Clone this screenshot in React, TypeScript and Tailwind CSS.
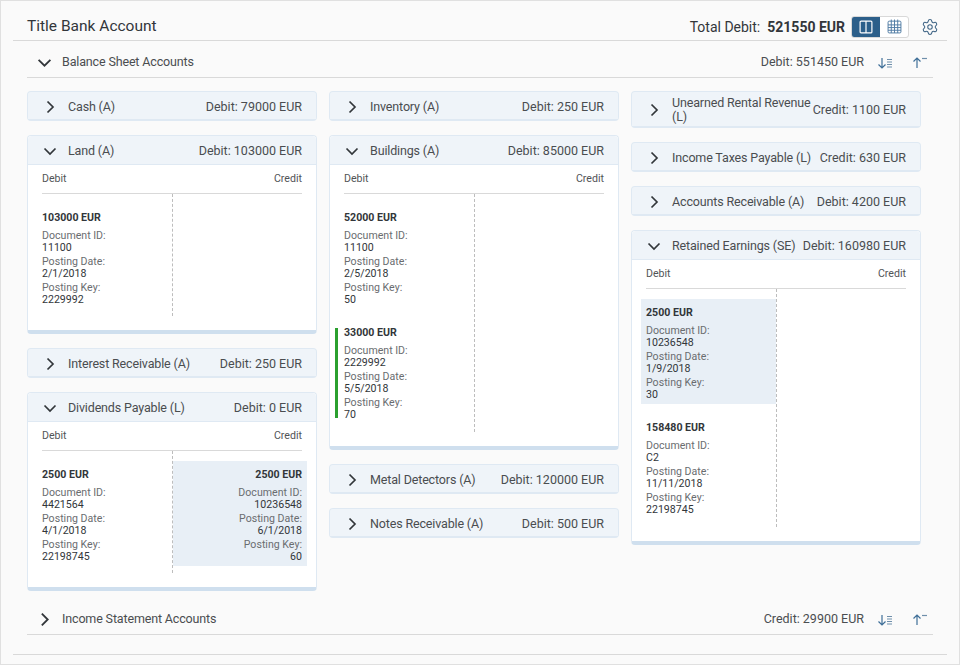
import React from "react";
import { Settings } from "lucide-react";

const FONT = "font-['Roboto',sans-serif]";

interface Entry {
  amount: string;
  docId: string;
  date: string;
  postingKey: string;
  highlighted?: boolean;
  marked?: boolean;
}

interface Account {
  name: React.ReactNode;
  total: string;
  debit?: Entry[];
  credit?: Entry[];
}

const leftColumn: Account[] = [
  { name: "Cash (A)", total: "Debit: 79000 EUR" },
  {
    name: "Land (A)",
    total: "Debit: 103000 EUR",
    debit: [{ amount: "103000 EUR", docId: "11100", date: "2/1/2018", postingKey: "2229992" }],
    credit: []
  },
  { name: "Interest Receivable (A)", total: "Debit: 250 EUR" },
  {
    name: "Dividends Payable (L)",
    total: "Debit: 0 EUR",
    debit: [{ amount: "2500 EUR", docId: "4421564", date: "4/1/2018", postingKey: "22198745" }],
    credit: [{ amount: "2500 EUR", docId: "10236548", date: "6/1/2018", postingKey: "60", highlighted: true }]
  }
];

const middleColumn: Account[] = [
  { name: "Inventory (A)", total: "Debit: 250 EUR" },
  {
    name: "Buildings (A)",
    total: "Debit: 85000 EUR",
    debit: [
      { amount: "52000 EUR", docId: "11100", date: "2/5/2018", postingKey: "50" },
      { amount: "33000 EUR", docId: "2229992", date: "5/5/2018", postingKey: "70", marked: true }
    ],
    credit: []
  },
  { name: "Metal Detectors (A)", total: "Debit: 120000 EUR" },
  { name: "Notes Receivable (A)", total: "Debit: 500 EUR" }
];

const rightColumn: Account[] = [
  { name: "Unearned Rental Revenue (L)", total: "Credit: 1100 EUR" },
  { name: "Income Taxes Payable (L)", total: "Credit: 630 EUR" },
  { name: "Accounts Receivable (A)", total: "Debit: 4200 EUR" },
  {
    name: "Retained Earnings (SE)",
    total: "Debit: 160980 EUR",
    debit: [
      { amount: "2500 EUR", docId: "10236548", date: "1/9/2018", postingKey: "30", highlighted: true },
      { amount: "158480 EUR", docId: "C2", date: "11/11/2018", postingKey: "22198745" }
    ],
    credit: []
  }
];

const Chevron = ({ open, size = 14 }: { open: boolean; size?: number }) => (
  <svg width={size} height={size} viewBox="0 0 14 14" fill="none" stroke="#32363a" strokeWidth="1.7" className="shrink-0">
    {open ? <path d="M1.500 4.500 7 10l5.500-5.500" /> : <path d="M4.500 1.500 10 7l-5.500 5.500" />}
  </svg>
);

const ExpandAllIcon = () => (
  <svg width="16" height="14" viewBox="0 0 16 14" fill="none" stroke="#3f6f98" strokeWidth="1.2">
    <path d="M5 2v10M1.500 8.500 5 12l3.500-3.500" />
    <path d="M10 3.500h5M10 6h5M10 8.500h5M10 11h5" stroke="#6f8fab" />
  </svg>
);

const CollapseAllIcon = () => (
  <svg width="16" height="14" viewBox="0 0 16 14" fill="none" stroke="#3f6f98" strokeWidth="1.2">
    <path d="M5 12V2M1.500 5.500 5 2l3.500 3.500" />
    <path d="M10 2.500h5" stroke="#6f8fab" />
  </svg>
);

const ColumnsIcon = () => (
  <svg width="14" height="14" viewBox="0 0 14 14" fill="none" stroke="#ffffff" strokeWidth="1.2">
    <rect x="1.100" y="1.100" width="11.800" height="11.800" rx="1" />
    <path d="M7 1v12" />
  </svg>
);

const TableIcon = () => (
  <svg width="15" height="15" viewBox="0 0 14 14" fill="none" stroke="#4f7ba3" strokeWidth="0.9">
    <rect x="1" y="2" width="12" height="11" rx="1" />
    <path d="M1 5.500h12M1 8h12M1 10.500h12M4 0.500V13M7 0.500V13M10 0.500V13" />
  </svg>
);

const EntryBlock = ({ entry, align }: { entry: Entry; align: "left" | "right" }) => (
  <div
    className={`relative h-[105px] px-[5px] pt-[7px] text-[10.6px] leading-[12px] ${align === "right" ? "text-right" : ""} ${
      entry.highlighted ? "bg-[#e8eff6]" : ""
    }`}
  >
    {entry.marked && <div className="absolute left-[-4px] top-[9px] h-[90px] w-[3px] bg-[#2ba02f]" />}
    <div className="flex h-[14px] items-center font-bold text-[#32363a]">
      <span className={align === "right" ? "ml-auto" : ""}>{entry.amount}</span>
    </div>
    <div className="mt-[5px] text-[#6a6d70]">Document ID:</div>
    <div className="text-[#32363a]">{entry.docId}</div>
    <div className="mt-[2px] text-[#6a6d70]">Posting Date:</div>
    <div className="text-[#32363a]">{entry.date}</div>
    <div className="mt-[2px] text-[#6a6d70]">Posting Key:</div>
    <div className="text-[#32363a]">{entry.postingKey}</div>
  </div>
);

const AccountCard = ({ account }: { account: Account }) => {
  const open = account.debit !== undefined;
  const multi = (account.debit?.length ?? 0) > 1;
  return (
    <div
      className={`rounded-[4px] border border-[#dfe9f3] ${
        open ? "border-b-[4px] border-b-[#cfdfee] bg-white" : "border-b-[2px] bg-[#eff4f9]"
      }`}
    >
      <div
        className={`flex items-center rounded-t-[4px] bg-[#eff4f9] pl-[15px] pr-[14px] leading-[14px] ${
          open ? "h-[29px] border-b border-[#dfe9f3] pt-[1px]" : "min-h-[27px] pb-[2px] pt-[4px]"
        }`}
      >
        <div className="flex w-[25px] shrink-0 items-center">
          <Chevron open={open} />
        </div>
        <div className="min-w-0 flex-1 text-[12.5px] tracking-[-0.15px] text-[#4a4d50]">{account.name}</div>
        <div className="shrink-0 whitespace-nowrap text-[12.5px] text-[#4a4d50]">{account.total}</div>
      </div>
      {open && (
        <div className="px-[14px] pb-[14px]">
          <div className="flex h-[29px] items-center justify-between border-b border-[#d9d9d9] pb-[1px] text-[10.6px] text-[#515456]">
            <span>Debit</span>
            <span>Credit</span>
          </div>
          <div className="mx-[-5px] flex">
            <div
              className={`w-[136px] shrink-0 space-y-[10px] border-r border-dashed border-[#bdbdbd] pt-[10px] ${
                multi ? "pb-[8px]" : "pb-[7px]"
              }`}
            >
              {account.debit?.map((e) => (
                <EntryBlock key={e.amount} entry={e} align="left" />
              ))}
            </div>
            <div className="flex-1 space-y-[10px] pt-[10px]">
              {account.credit?.map((e) => (
                <EntryBlock key={e.amount} entry={e} align="right" />
              ))}
            </div>
          </div>
        </div>
      )}
    </div>
  );
};

const SectionHeader = ({ title, total, open }: { title: string; total: string; open: boolean }) => (
  <div className="mx-[26px] flex h-[37px] shrink-0 items-center border-b border-[#d9d9d9] pt-[7px]">
    <div className="flex w-[35px] shrink-0 justify-start pl-[10px]">
      <Chevron open={open} size={15} />
    </div>
    <div className="flex-1 text-[12.5px] tracking-[-0.15px] text-[#4a4d50]">{title}</div>
    <div className="text-[12.5px] text-[#4a4d50]">{total}</div>
    <div className="ml-[12px] flex w-[18px] justify-center">
      <ExpandAllIcon />
    </div>
    <div className="ml-[16px] mr-[3px] flex w-[20px] justify-center">
      <CollapseAllIcon />
    </div>
  </div>
);

const Column = ({ accounts }: { accounts: Account[] }) => (
  <div className="flex w-[290px] flex-col gap-[14px]">
    {accounts.map((a, i) => (
      <AccountCard key={i} account={a} />
    ))}
  </div>
);

export default function App() {
  return (
    <div className={`flex h-[665px] w-[960px] flex-col border border-[#e0e0e0] bg-[#fafafa] ${FONT}`}>
      {/* Page Header */}
      <div className="mx-[12px] flex h-[40px] shrink-0 items-center border-b border-[#d9d9d9] pl-[14px] pr-[9px] pt-[12px]">
        <h1 className="flex-1 text-[15.5px] text-[#32363a]">Title Bank Account</h1>
        <span className="text-sm text-[#32363a]">Total Debit:</span>
        <span className="ml-[7px] text-sm font-bold text-[#32363a]">521550 EUR</span>
        <div className="ml-[6px] flex h-[22px] w-[58px] overflow-hidden rounded-[3px] border border-[#d9d9d9] bg-white">
          <div className="flex w-[28px] items-center justify-center bg-[#2c5f8a]">
            <ColumnsIcon />
          </div>
          <div className="flex flex-1 items-center justify-center">
            <TableIcon />
          </div>
        </div>
        <div className="ml-[13px] flex w-[16px] justify-center">
          <Settings size={18} strokeWidth={1.4} color="#3f6485" className="shrink-0" />
        </div>
      </div>

      <SectionHeader title="Balance Sheet Accounts" total="Debit: 551450 EUR" open={true} />

      {/* Account columns */}
      <div className="flex flex-1 items-start gap-[12px] pl-[26px] pt-[13px]">
        <Column accounts={leftColumn} />
        <Column accounts={middleColumn} />
        <Column accounts={rightColumn} />
      </div>

      <SectionHeader title="Income Statement Accounts" total="Credit: 29900 EUR" open={false} />
      <div className="mx-[12px] mb-[9px] mt-[19px] shrink-0 border-b border-[#d9d9d9]" />
    </div>
  );
}
